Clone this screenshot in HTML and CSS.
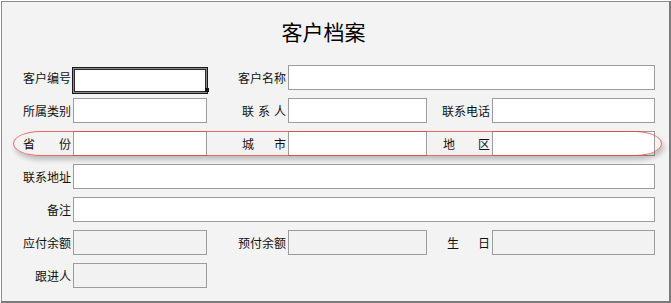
FILE: index.html
```html
<!DOCTYPE html>
<html lang="zh-CN">
<head>
    <meta charset="UTF-8">
    <title>客户档案</title>
    <link rel="stylesheet" href="styles.css">
</head>
<body>
    <div class="frame">
        <div class="title">客户档案</div>
        <div class="form">
            <label class="lbl">客户编号</label>
            <div class="focus-box"><input type="text" class="field focused"><span class="handle"></span></div>
            <label class="lbl">客户名称</label>
            <input type="text" class="field span3">

            <label class="lbl">所属类别</label>
            <input type="text" class="field">
            <label class="lbl"><span class="spread w44">联<i>系</i>人</span></label>
            <input type="text" class="field">
            <label class="lbl">联系电话</label>
            <input type="text" class="field">

            <label class="lbl"><span class="spread w48">省<i>份</i></span></label>
            <input type="text" class="field">
            <label class="lbl"><span class="spread w44">城<i>市</i></span></label>
            <input type="text" class="field">
            <label class="lbl"><span class="spread w47">地<i>区</i></span></label>
            <input type="text" class="field">

            <label class="lbl">联系地址</label>
            <input type="text" class="field span5">

            <label class="lbl">备注</label>
            <input type="text" class="field span5">

            <label class="lbl">应付余额</label>
            <input type="text" class="field" disabled>
            <label class="lbl">预付余额</label>
            <input type="text" class="field" disabled>
            <label class="lbl"><span class="spread w43">生<i>日</i></span></label>
            <input type="text" class="field" disabled>

            <label class="lbl">跟进人</label>
            <input type="text" class="field" disabled>
        </div>
        <div class="mark"></div>
    </div>
</body>
</html>
```

FILE: styles.css
```css
body {
    margin: 0;
    background-color: #ffffff;
    font-family: "Noto Sans CJK SC", "Microsoft YaHei", sans-serif;
    color: #111;
}
.frame {
    position: relative;
    margin: 1px 0 0 1px;
    width: 667px;
    height: 299px;
    background-color: #f3f3f3;
    border-top: 1px solid #8c8c8c;
    border-left: 1px solid #8c8c8c;
    border-right: 2px solid #7a7a7a;
    border-bottom: 2px solid #7a7a7a;
}
.title {
    width: 643px;
    padding-top: 14px;
    height: 49px;
    font-size: 21px;
    line-height: 30px;
    text-align: center;
    color: #000;
}
.form {
    display: grid;
    grid-template-columns: 71px 134px 81px 139px 65px 163px;
    grid-auto-rows: 25px;
    row-gap: 8px;
}
.lbl {
    display: flex;
    align-items: center;
    justify-content: flex-end;
    padding-right: 2px;
    font-size: 12px;
    white-space: nowrap;
}
.spread {
    display: flex;
    justify-content: space-between;
}
.spread i {
    font-style: normal;
}
.w43 { width: 43px; }
.w44 { width: 44px; }
.w47 { width: 47px; }
.w48 { width: 48px; }
.field {
    box-sizing: border-box;
    width: 100%;
    height: 25px;
    margin: 0;
    padding: 0 4px;
    border: 1px solid #9c9c9c;
    background-color: #ffffff;
    font-size: 12px;
    outline: none;
}
.field:disabled {
    background-color: #f2f2f2;
}
.span3 {
    grid-column: span 3;
}
.span5 {
    grid-column: span 5;
}
.focus-box {
    position: relative;
}
.field.focused {
    width: 136px;
    height: 27px;
    margin: -1px 0 0 -1px;
    border: 1px solid #1a1a1a;
    box-shadow: inset 0 0 0 1px #8a8a8a, inset 0 0 0 2px #2a2a2a;
}
.handle {
    position: absolute;
    right: -2px;
    bottom: -2px;
    width: 4px;
    height: 4px;
    background-color: #111;
}
.mark {
    position: absolute;
    left: 11px;
    top: 129px;
    width: 647px;
    height: 23px;
    border: 1.5px solid rgba(235, 60, 60, 0.75);
    border-radius: 28px / 13px;
    box-shadow: 2px 4px 5px rgba(0, 0, 0, 0.22);
    pointer-events: none;
}
```
